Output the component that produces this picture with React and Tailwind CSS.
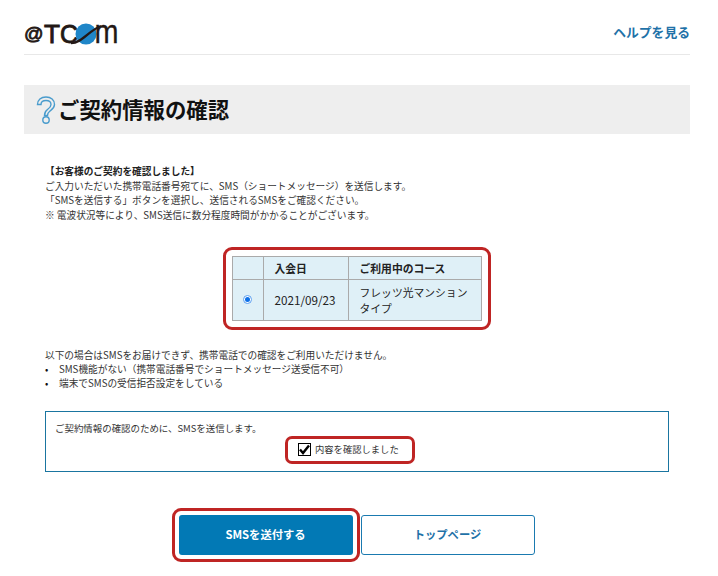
const jp = { fontFamily: '"Noto Sans CJK JP", "Liberation Sans", sans-serif' };

function Logo() {
  const latin = 'Liberation Sans, sans-serif';
  return (
    <svg width="104" height="40" viewBox="0 0 104 40" fill="#231815" stroke="#231815" strokeWidth="0.8">
      <text x="0" y="28" fontFamily={latin} fontSize="19" textLength="19.500" lengthAdjust="spacingAndGlyphs">@</text>
      <text x="20" y="31" fontFamily={latin} fontSize="25" textLength="16" lengthAdjust="spacingAndGlyphs">T</text>
      <text x="36" y="31" fontFamily={latin} fontSize="25" textLength="18" lengthAdjust="spacingAndGlyphs">C</text>
      <circle cx="62" cy="22" r="10.500" fill="#1f86c8" stroke="none" />
      <path d="M47 31 C58 31 64 19 77 14" fill="none" strokeWidth="2.400" />
      <text x="70.500" y="31" fontFamily={latin} fontSize="34" textLength="24" lengthAdjust="spacingAndGlyphs" strokeWidth="0.300">m</text>
    </svg>
  );
}

function QuestionIcon() {
  return (
    <svg width="20" height="28" viewBox="0 0 20 28" fill="none" stroke="#4a9ccd" strokeWidth="1.400">
      <path d="M1.500 8.500C1.500 4 5 1 10 1s8.500 3 8.500 7.500c0 3.500-2.500 5-4.500 6.500-1.800 1.400-2.500 2.500-2.500 4.500H8.500c0-3 1-4.500 3-6 2-1.500 3.500-2.500 3.500-5 0-2.500-2-4-5-4S5 6 5 8.500Z" />
      <circle cx="10" cy="24" r="3.200" />
    </svg>
  );
}

export default function App() {
  return (
    <div className="w-[718px] h-[576px] bg-white overflow-hidden pl-6 pr-7 text-[#333]" style={jp}>
      <header className="h-[55px] flex items-center justify-between border-b border-[#e8e8e8] pt-[10px]">
        <Logo />
        <a className="text-[12.800px] font-bold text-[#1f72a8]">ヘルプを見る</a>
      </header>

      <h1 className="mt-[30px] h-[49px] bg-[#eeeeee] flex items-center gap-[2px] pl-[12px] text-[21.400px] font-bold text-[#111]">
        <QuestionIcon />
        ご契約情報の確認
      </h1>

      <div className="mt-[30px] ml-[21px] text-[9.680px] leading-[14.500px]">
        <p className="font-bold text-[#222]">【お客様のご契約を確認しました】</p>
        <p>ご入力いただいた携帯電話番号宛てに、SMS（ショートメッセージ）を送信します。</p>
        <p>「SMSを送信する」ボタンを選択し、送信されるSMSをご確認ください。</p>
        <p>※ 電波状況等により、SMS送信に数分程度時間がかかることがございます。</p>
      </div>

      <div className="mt-[25px] flex justify-center pr-[1px]">
        <div className="border-[3px] border-[#bf2524] rounded-[9px] px-[6px] py-[6px]">
          <table className="border-collapse w-[250px] bg-[#dff0f7] text-[10.800px] text-[#222]">
            <tbody>
              <tr className="h-[23px] font-bold">
                <td className="border border-[#aaaaaa] w-[31px]"></td>
                <td className="border border-[#aaaaaa] w-[85px] pl-[11px]">入会日</td>
                <td className="border border-[#aaaaaa] pl-[11px]">ご利用中のコース</td>
              </tr>
              <tr className="h-[41px]">
                <td className="border border-[#aaaaaa]">
                  <div className="w-[9px] h-[9px] mx-auto mb-[2px] rounded-full border border-[#5b9ff0] bg-white flex items-center justify-center">
                    <div className="w-[5px] h-[5px] rounded-full bg-[#0b6fe8]"></div>
                  </div>
                </td>
                <td className="border border-[#aaaaaa] pl-[11px] text-[11.700px]">2021/09/23</td>
                <td className="border border-[#aaaaaa] pl-[11px] leading-[16px]">フレッツ光マンション<br />タイプ</td>
              </tr>
            </tbody>
          </table>
        </div>
      </div>

      <div className="mt-[18px] ml-[21px] text-[9.680px] leading-[14.500px]">
        <p>以下の場合はSMSをお届けできず、携帯電話での確認をご利用いただけません。</p>
        <ul className="-mt-[1px]">
          <li className="flex"><span className="w-[14px] text-[#111]">•</span>SMS機能がない（携帯電話番号でショートメッセージ送受信不可）</li>
          <li className="flex"><span className="w-[14px] text-[#111]">•</span>端末でSMSの受信拒否設定をしている</li>
        </ul>
      </div>

      <div className="mt-[20px] ml-[21px] mr-[21px] h-[61px] border border-[#1a75a0] pt-[10px] pl-[9px] text-[9.300px] leading-[13px]">
        <p className="text-[9.450px]">ご契約情報の確認のために、SMSを送信します。</p>
        <div className="mt-[1px] flex justify-center pr-[23px]">
          <label className="h-[28px] w-[130px] border-[3px] border-[#bf2524] rounded-[7px] flex items-center pl-[10px] gap-[4px]">
            <span className="w-[13px] h-[13px] border border-black bg-white flex items-center justify-center">
              <svg width="11" height="11" viewBox="0 0 11 11"><path d="M1 5.500 4 9 10 1.500" fill="none" stroke="#000" strokeWidth="2.400" /></svg>
            </span>
            内容を確認しました
          </label>
        </div>
      </div>

      <div className="mt-[36px] flex items-center justify-center pr-[8px]">
        <div className="border-[3px] border-[#bf2524] rounded-[9px] p-[4px]">
          <button className="w-[174px] h-[40px] rounded-[3px] bg-[#0279b5] text-white text-[11.300px] font-bold">SMSを送付する</button>
        </div>
        <button className="ml-[1px] w-[174px] h-[40px] rounded-[3px] border border-[#1a7ab0] bg-white text-[#1f72a8] text-[11.300px] font-bold">トップページ</button>
      </div>
    </div>
  );
}
